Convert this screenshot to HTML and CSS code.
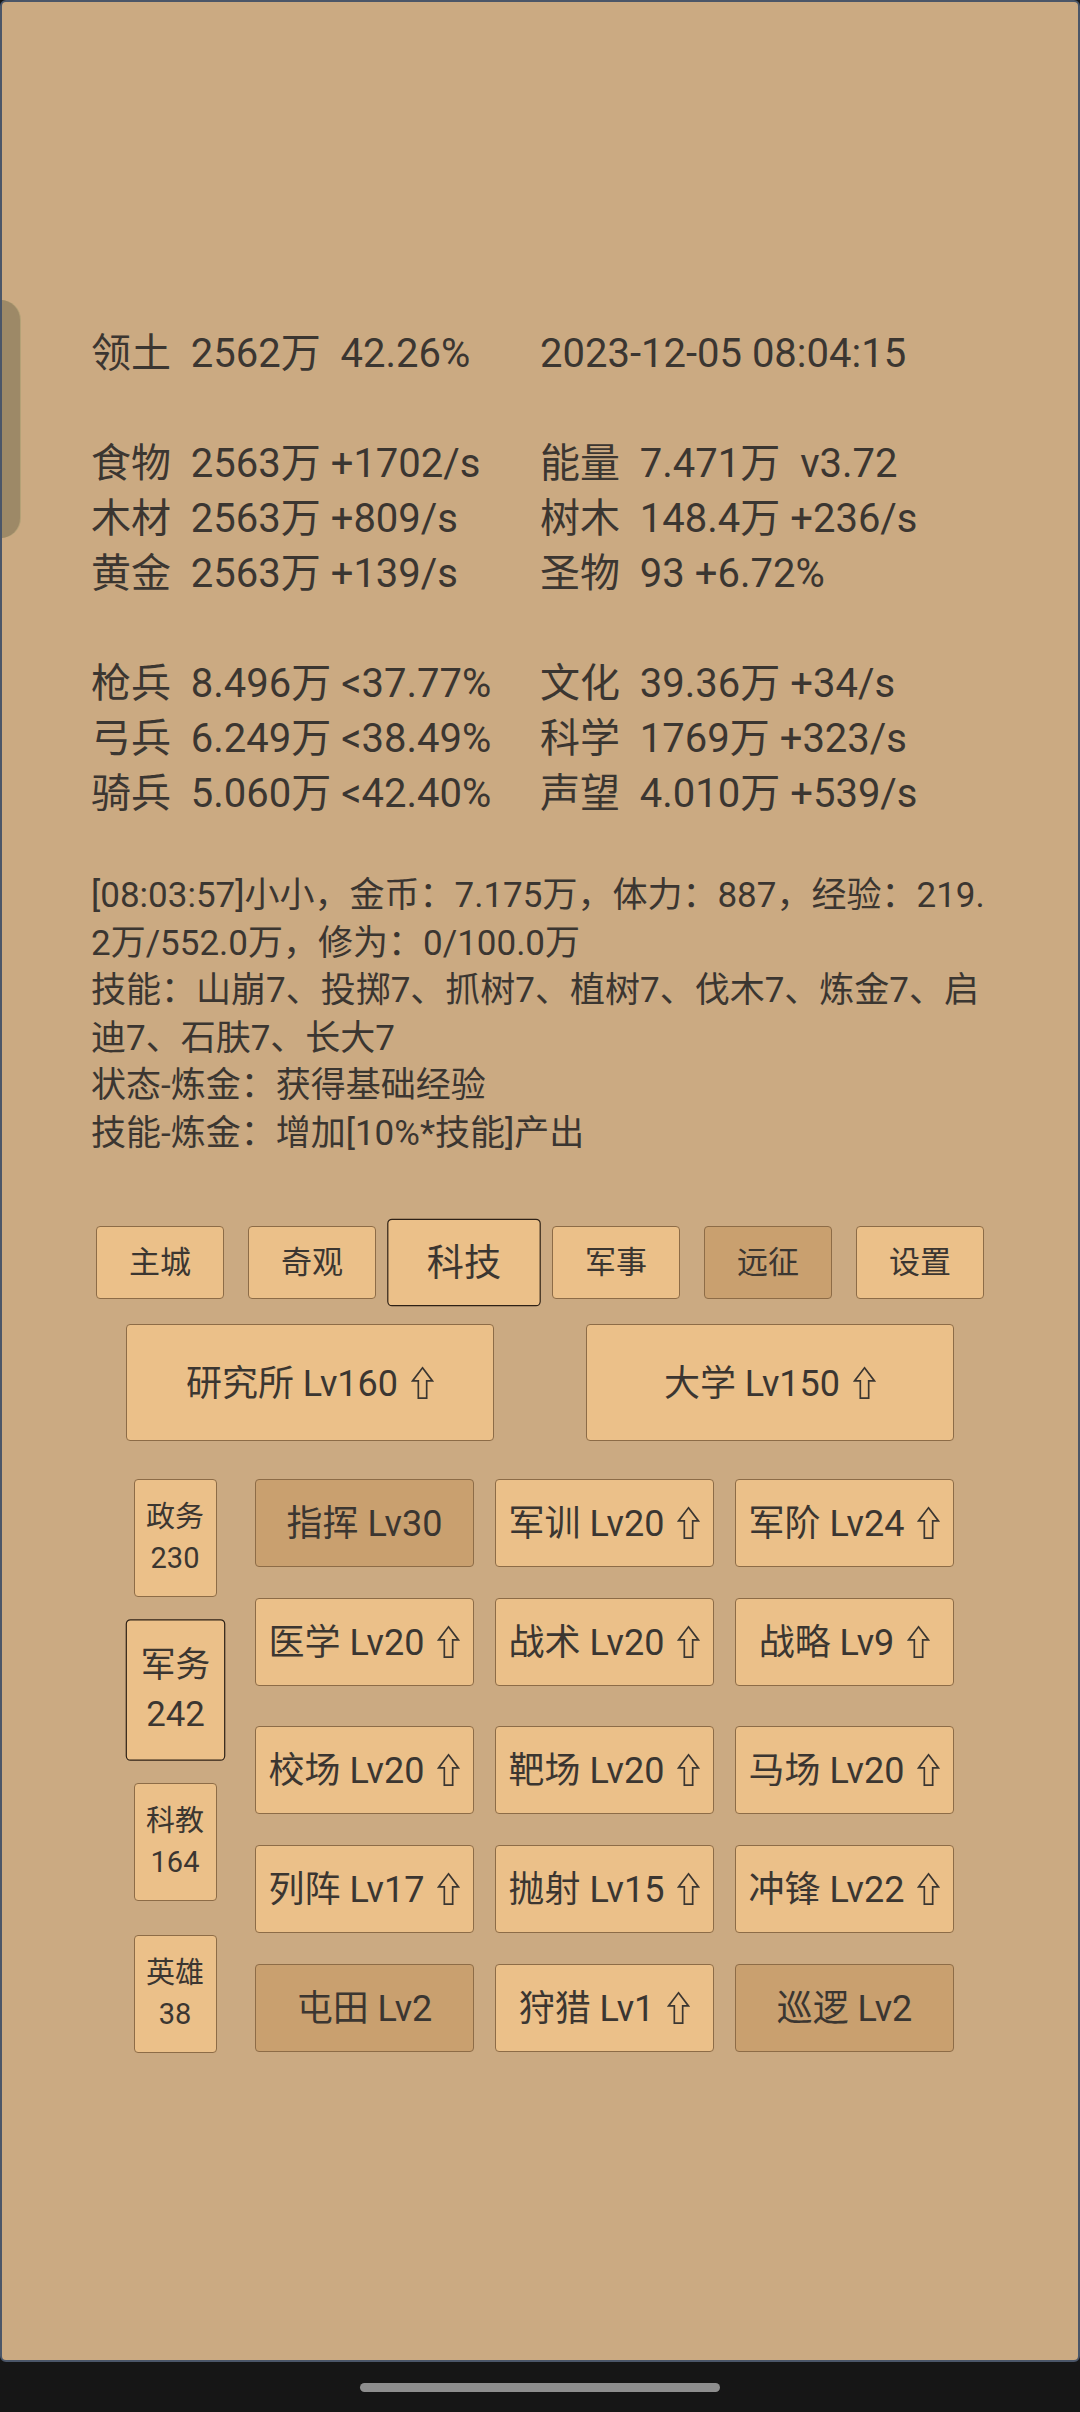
FILE: index.html
```html
<!DOCTYPE html>
<html lang="zh">
<head>
    <meta charset="UTF-8">
    <meta name="viewport" content="width=device-width, initial-scale=1.0">
    <title>领土</title>
    <link rel="stylesheet" href="styles.css">
</head>
<body>
    <svg class="defs" width="0" height="0">
        <symbol id="up" viewBox="0 0 22 32">
            <path d="M11 1.5 L20.5 14 L15 14 L15 30.5 L7 30.5 L7 14 L1.5 14 Z" fill="none" stroke="#3b3631" stroke-width="1.6" stroke-linejoin="miter"/>
        </symbol>
    </svg>

    <div class="screen">
        <div class="handle"></div>

        <div class="stats">
            <div class="group">
                <div class="row"><span>领土  2562万  42.26%</span><span>2023-12-05 08:04:15</span></div>
            </div>
            <div class="group">
                <div class="row"><span>食物  2563万 +1702/s</span><span>能量  7.471万  v3.72</span></div>
                <div class="row"><span>木材  2563万 +809/s</span><span>树木  148.4万 +236/s</span></div>
                <div class="row"><span>黄金  2563万 +139/s</span><span>圣物  93 +6.72%</span></div>
            </div>
            <div class="group">
                <div class="row"><span>枪兵  8.496万 &lt;37.77%</span><span>文化  39.36万 +34/s</span></div>
                <div class="row"><span>弓兵  6.249万 &lt;38.49%</span><span>科学  1769万 +323/s</span></div>
                <div class="row"><span>骑兵  5.060万 &lt;42.40%</span><span>声望  4.010万 +539/s</span></div>
            </div>
        </div>

        <p class="log">
            [08:03:57]小小，金币：7.175万，体力：887，经验：219.<br>
            2万/552.0万，修为：0/100.0万<br>
            技能：山崩7、投掷7、抓树7、植树7、伐木7、炼金7、启<br>
            迪7、石肤7、长大7<br>
            状态-炼金：获得基础经验<br>
            技能-炼金：增加[10%*技能]产出
        </p>

        <div class="tabs">
            <div class="tab">主城</div>
            <div class="tab">奇观</div>
            <div class="tab active">科技</div>
            <div class="tab">军事</div>
            <div class="tab dark">远征</div>
            <div class="tab">设置</div>
        </div>

        <div class="main-btns">
            <div class="btn big">研究所 Lv160<svg class="up"><use href="#up"/></svg></div>
            <div class="btn big">大学 Lv150<svg class="up"><use href="#up"/></svg></div>
        </div>

        <div class="lower">
            <div class="side">
                <div class="side-btn">政务<br>230</div>
                <div class="side-btn active">军务<br>242</div>
                <div class="side-btn">科教<br>164</div>
                <div class="side-btn">英雄<br>38</div>
            </div>
            <div class="grid">
                <div class="btn dark">指挥 Lv30</div>
                <div class="btn">军训 Lv20<svg class="up"><use href="#up"/></svg></div>
                <div class="btn">军阶 Lv24<svg class="up"><use href="#up"/></svg></div>

                <div class="btn">医学 Lv20<svg class="up"><use href="#up"/></svg></div>
                <div class="btn">战术 Lv20<svg class="up"><use href="#up"/></svg></div>
                <div class="btn">战略 Lv9<svg class="up"><use href="#up"/></svg></div>

                <div class="btn push">校场 Lv20<svg class="up"><use href="#up"/></svg></div>
                <div class="btn push">靶场 Lv20<svg class="up"><use href="#up"/></svg></div>
                <div class="btn push">马场 Lv20<svg class="up"><use href="#up"/></svg></div>

                <div class="btn">列阵 Lv17<svg class="up"><use href="#up"/></svg></div>
                <div class="btn">抛射 Lv15<svg class="up"><use href="#up"/></svg></div>
                <div class="btn">冲锋 Lv22<svg class="up"><use href="#up"/></svg></div>

                <div class="btn dark">屯田 Lv2</div>
                <div class="btn">狩猎 Lv1<svg class="up"><use href="#up"/></svg></div>
                <div class="btn dark">巡逻 Lv2</div>
            </div>
        </div>
    </div>

    <div class="navbar">
        <div class="pill"></div>
    </div>
</body>
</html>
```

FILE: styles.css
```css
body {
    margin: 0;
    background-color: #161616;
    font-family: Roboto, "Noto Sans CJK SC", sans-serif;
    color: #3b3631;
}

.defs {
    position: absolute;
}

.screen {
    position: relative;
    box-sizing: border-box;
    height: 2362px;
    background-color: #cbaa82;
    border: 2px solid #4b5668;
    border-radius: 6px;
    overflow: hidden;
}

.handle {
    position: absolute;
    left: -2px;
    top: 298px;
    width: 20px;
    height: 238px;
    background-color: #9d8967;
    border-radius: 0 20px 20px 0;
    box-shadow: 1px 0 0 #b4a277;
}

/* stats */
.stats {
    padding: 324px 0 0 89px;
    font-size: 40px;
}

.group {
    margin-bottom: 55px;
}

.group:last-child {
    margin-bottom: 0;
}

.row {
    display: grid;
    grid-template-columns: 449px auto;
    height: 55px;
    line-height: 55px;
    white-space: pre;
}

/* log */
.log {
    margin: 51px 0 0;
    padding-left: 89px;
    font-size: 35px;
    line-height: 47.6px;
    white-space: nowrap;
}

/* buttons */
.tab,
.btn,
.side-btn {
    box-sizing: border-box;
    display: flex;
    align-items: center;
    justify-content: center;
    background-color: #ebc089;
    border: 1px solid #8d6c47;
    border-radius: 4px;
}

.tab,
.btn {
    padding-bottom: 5px;
}

.dark {
    background-color: #c9a06f;
}

.active {
    transform: scale(1.2);
    border-color: #2e2116;
}

.tabs {
    display: flex;
    justify-content: center;
    margin-top: 68px;
}

.tab {
    width: 128px;
    height: 73px;
    margin: 0 12px;
    font-size: 31px;
}

.main-btns {
    display: flex;
    justify-content: center;
    gap: 92px;
    margin-top: 25px;
}

.btn {
    height: 88px;
    font-size: 36px;
    white-space: pre;
}

.btn.big {
    width: 368px;
    height: 117px;
}

.up {
    width: 23px;
    height: 34px;
    margin: 6px 0 0 13px;
}

.lower {
    display: flex;
    margin-top: 38px;
    padding-left: 123px;
}

.side {
    width: 100px;
    display: flex;
    flex-direction: column;
    align-items: center;
    gap: 34px;
}

.side-btn {
    width: 83px;
    height: 118px;
    font-size: 29px;
    line-height: 41px;
    text-align: center;
}

.grid {
    margin-left: 30px;
    display: grid;
    grid-template-columns: repeat(3, 219px);
    column-gap: 21px;
    row-gap: 31px;
    align-content: start;
}

.grid .push {
    margin-top: 9px;
}

.navbar {
    height: 50px;
    display: flex;
    justify-content: center;
    align-items: center;
}

.pill {
    width: 360px;
    height: 9px;
    border-radius: 5px;
    background-color: #8e8e8e;
}
```
